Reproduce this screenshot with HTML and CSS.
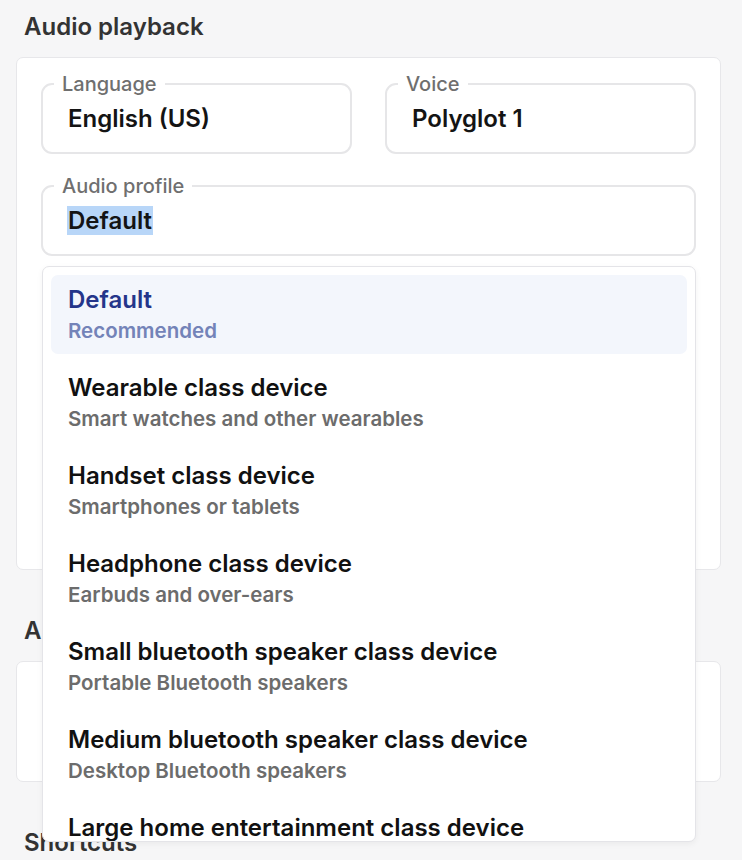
FILE: index.html
```html
<!DOCTYPE html>
<html lang="en">
<head>
<meta charset="utf-8">
<title>Settings</title>
<link rel="stylesheet" href="styles.css">
</head>
<body>
<main class="page">
  <section class="section">
    <h2 class="section-title">Audio playback</h2>
    <div class="card">
      <div class="row-2">
        <fieldset class="field">
          <legend class="field-label">Language</legend>
          <div class="field-value">English (US)</div>
        </fieldset>
        <fieldset class="field">
          <legend class="field-label">Voice</legend>
          <div class="field-value">Polyglot 1</div>
        </fieldset>
      </div>
      <div class="combo">
        <fieldset class="field">
          <legend class="field-label">Audio profile</legend>
          <div class="field-value"><span class="selected-text">Default</span></div>
        </fieldset>
        <ul class="menu">
          <li class="menu-item active">
            <div class="item-title">Default</div>
            <div class="item-sub">Recommended</div>
          </li>
          <li class="menu-item">
            <div class="item-title">Wearable class device</div>
            <div class="item-sub">Smart watches and other wearables</div>
          </li>
          <li class="menu-item">
            <div class="item-title">Handset class device</div>
            <div class="item-sub">Smartphones or tablets</div>
          </li>
          <li class="menu-item">
            <div class="item-title">Headphone class device</div>
            <div class="item-sub">Earbuds and over-ears</div>
          </li>
          <li class="menu-item">
            <div class="item-title">Small bluetooth speaker class device</div>
            <div class="item-sub">Portable Bluetooth speakers</div>
          </li>
          <li class="menu-item">
            <div class="item-title">Medium bluetooth speaker class device</div>
            <div class="item-sub">Desktop Bluetooth speakers</div>
          </li>
          <li class="menu-item">
            <div class="item-title">Large home entertainment class device</div>
            <div class="item-sub">Smart TVs and home theatre systems</div>
          </li>
        </ul>
      </div>
    </div>
  </section>
  <section class="section">
    <h2 class="section-title">Appearance</h2>
    <div class="card card-short"></div>
  </section>
  <section class="section">
    <h2 class="section-title">Shortcuts</h2>
  </section>
</main>
</body>
</html>
```

FILE: styles.css
```css
* { box-sizing: border-box; }
html, body {
  margin: 0;
  padding: 0;
  background: #f6f6f7;
  font-family: Inter, "Noto Sans", "Liberation Sans", sans-serif;
  color: #111;
}
.page {
  width: 705px;
  margin-left: 16px;
  padding-top: 13px;
}
.section + .section { margin-top: 47px; }
.section-title {
  margin: 0 0 16px 8px;
  font-size: 24px;
  line-height: 28px;
  font-weight: 600;
  color: #333;
}
.card {
  background: #fff;
  border: 1px solid #e7e7ea;
  border-radius: 7px;
  padding: 15px 24px 0;
  height: 513px;
}
.card-short { height: 121px; }
.row-2 {
  display: grid;
  grid-template-columns: 1fr 1fr;
  column-gap: 33px;
}
.field {
  margin: 0;
  padding: 0 11px;
  border: 2px solid #e6e6e8;
  border-radius: 11px;
  min-width: 0;
}
.field-label {
  padding: 0 8px;
  font-size: 20px;
  line-height: 22px;
  font-weight: 500;
  color: #6f6f6f;
}
.field-value {
  padding: 9px 14px 18px;
  font-size: 24px;
  line-height: 30px;
  font-weight: 600;
  color: #141414;
}
.combo {
  position: relative;
  margin-top: 21px;
}
.selected-text {
  background: #b8d6f8;
  padding: 0 1px;
  margin-left: -1px;
}
.menu {
  position: absolute;
  left: 1px;
  right: 0;
  top: calc(100% + 10px);
  height: 576px;
  margin: 0;
  padding: 8px;
  list-style: none;
  background: #fff;
  border: 1px solid #e4e4e8;
  border-radius: 7px;
  box-shadow: 0 2px 6px rgba(0, 0, 0, 0.05);
  overflow: hidden;
  z-index: 2;
}
.menu-item {
  padding: 10px 17px 10px;
  border-radius: 7px;
}
.menu-item + .menu-item { margin-top: 9px; }
.menu-item.active { background: #f3f6fc; }
.item-title {
  font-size: 24px;
  line-height: 30px;
  font-weight: 600;
  color: #111;
  white-space: nowrap;
}
.item-sub {
  margin-top: 3px;
  font-size: 20.5px;
  line-height: 26px;
  font-weight: 600;
  color: #6c6c6c;
  white-space: nowrap;
}
.menu-item.active .item-title { color: #24358a; }
.menu-item.active .item-sub { color: #7383b8; }
```
